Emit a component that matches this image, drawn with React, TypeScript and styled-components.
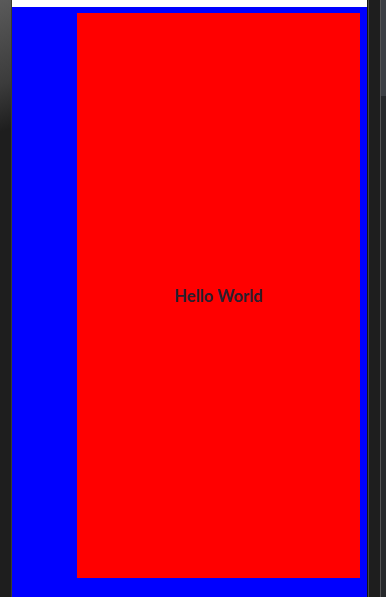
import React from 'react';
import styled, { createGlobalStyle } from 'styled-components';

const GlobalStyle = createGlobalStyle`
    html, body, #root {
        margin: 0;
        padding: 0;
        width: 100%;
        height: 100%;
        overflow: hidden;
        background: #1e1e1e;
    }
`;

const Frame = styled.div`
    display: flex;
    width: 386px;
    height: 597px;
`;

const LeftBezel = styled.div`
    width: 11px;
    background: linear-gradient(160deg, #5a5a5a 0%, #3c3c3c 14%, #1e1e1e 22%, #1e1e1e 100%);
    border-right: 1px solid #3b3a2c;
`;

const Screen = styled.div`
    display: flex;
    flex-direction: column;
    width: 356px;
`;

const StatusStrip = styled.div`
    height: 7px;
    background: #ffffff;
`;

const Viewport = styled.div`
    flex: 1;
    display: flex;
    background: #0000ff;
    padding: 6px 7px 19px 65px;
`;

const Card = styled.div`
    flex: 1;
    display: flex;
    align-items: center;
    justify-content: center;
    background: #ff0000;
`;

const Greeting = styled.span`
    font-family: Lato, 'Open Sans', sans-serif;
    font-weight: 700;
    font-size: 16.5px;
    color: #2b1f2e;
`;

const RightBezel = styled.div`
    display: flex;
    width: 18px;
    border-left: 1px solid #151515;
`;

const Rail = styled.div`
    width: 11px;
    background: #1e1e1e;
    border-left: 1px solid #474747;
    border-right: 1px solid #555555;
`;

const Scrollbar = styled.div`
    flex: 1;
    background: linear-gradient(180deg, #3c3f44 0px, #3c3f44 96px, #26282b 96px);
`;

const App = () => {
    return (
        <>
            <GlobalStyle />
            <Frame>
                <LeftBezel />
                <Screen>
                    <StatusStrip />
                    <Viewport>
                        <Card>
                            <Greeting>Hello World</Greeting>
                        </Card>
                    </Viewport>
                </Screen>
                <RightBezel>
                    <Rail />
                    <Scrollbar />
                </RightBezel>
            </Frame>
        </>
    );
};

export default App;
